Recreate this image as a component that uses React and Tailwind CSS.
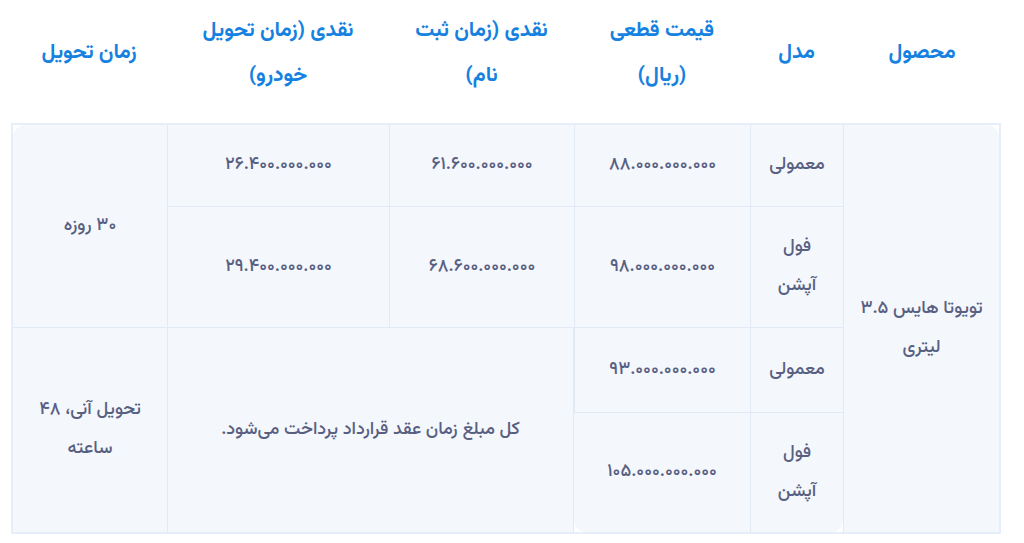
import React from 'react';

const font = { fontFamily: '"Vazirmatn", "Noto Sans Arabic", "DejaVu Sans", sans-serif' };

const cell = 'flex items-center justify-center text-center bg-[#f4f7fc] border-[#e2eaf6] px-3 leading-[39px]';

const App = () => {
  return (
    <div dir="rtl" style={font} className="w-[1024px] h-[543px] bg-white pl-[11px] pr-[23px] text-[#586082]">
      {/* header */}
      <div className="grid grid-cols-[158px_93px_176px_185px_222px_156px] h-[105px] text-[#1581e0] font-bold text-[21px] leading-[45px]">
        <div className="flex items-center justify-center text-center">محصول</div>
        <div className="flex items-center justify-center text-center">مدل</div>
        <div className="flex items-center justify-center text-center">قیمت قطعی<br />(ریال)</div>
        <div className="flex items-center justify-center text-center">نقدی (زمان ثبت<br />نام)</div>
        <div className="flex items-center justify-center text-center">نقدی (زمان تحویل<br />خودرو)</div>
        <div className="flex items-center justify-center text-center">زمان تحویل</div>
      </div>

      {/* body */}
      <div className="mt-[18px] w-[990px] border-2 border-[#e6eef9] bg-white grid grid-cols-[156px_93px_176px_185px_222px_154px] grid-rows-[82px_121px_85px_119px] text-[18px] font-medium">
        <div className={`${cell} col-start-1 row-start-1 row-span-4 border-l rounded-tr-xl`}>
          تویوتا هایس ۳.۵<br />لیتری
        </div>

        <div className={`${cell} col-start-2 row-start-1 border-l border-b`}>معمولی</div>
        <div className={`${cell} col-start-2 row-start-2 border-l border-b`}>فول<br />آپشن</div>
        <div className={`${cell} col-start-2 row-start-3 border-l border-b`}>معمولی</div>
        <div className={`${cell} col-start-2 row-start-4 border-l rounded-br-xl`}>فول<br />آپشن</div>

        <div className={`${cell} col-start-3 row-start-1 border-l border-b`}>۸۸.۰۰۰.۰۰۰.۰۰۰</div>
        <div className={`${cell} col-start-3 row-start-2 border-l border-b`}>۹۸.۰۰۰.۰۰۰.۰۰۰</div>
        <div className={`${cell} col-start-3 row-start-3 border-l border-b`}>۹۳.۰۰۰.۰۰۰.۰۰۰</div>
        <div className={`${cell} col-start-3 row-start-4 rounded-bl-xl`}>۱۰۵.۰۰۰.۰۰۰.۰۰۰</div>

        <div className={`${cell} col-start-4 row-start-1 border-l border-b`}>۶۱.۶۰۰.۰۰۰.۰۰۰</div>
        <div className={`${cell} col-start-4 row-start-2 border-l border-b`}>۶۸.۶۰۰.۰۰۰.۰۰۰</div>

        <div className={`${cell} col-start-5 row-start-1 border-l border-b`}>۲۶.۴۰۰.۰۰۰.۰۰۰</div>
        <div className={`${cell} col-start-5 row-start-2 border-l border-b`}>۲۹.۴۰۰.۰۰۰.۰۰۰</div>

        <div className={`${cell} col-start-4 col-span-2 row-start-3 row-span-2 border-l border-r`}>
          کل مبلغ زمان عقد قرارداد پرداخت می‌شود.
        </div>

        <div className={`${cell} col-start-6 row-start-1 row-span-2 border-b rounded-tl-xl`}>۳۰ روزه</div>
        <div className={`${cell} col-start-6 row-start-3 row-span-2`}>
          تحویل آنی، ۴۸<br />ساعته
        </div>
      </div>
    </div>
  );
};

export default App;
